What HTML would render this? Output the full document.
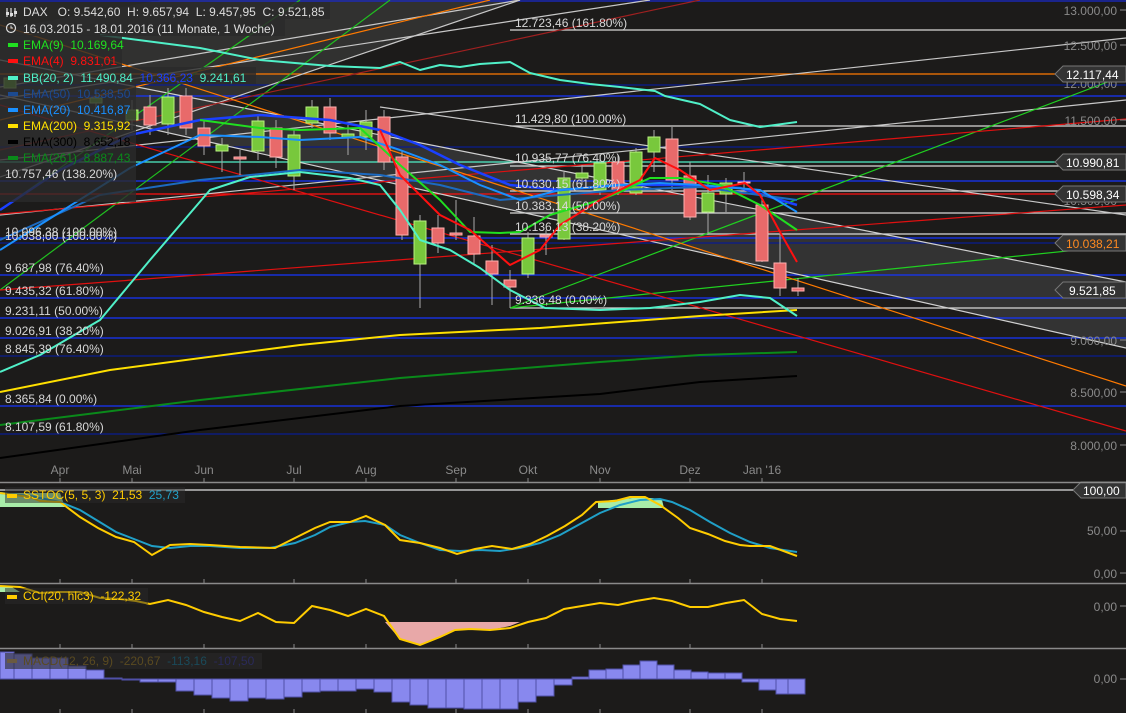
<!DOCTYPE html>
<html><head><meta charset="utf-8">
<style>
html,body{margin:0;padding:0;background:#1c1b1a;}
body{width:1126px;height:713px;overflow:hidden;position:relative;font-family:"Liberation Sans",sans-serif;}
svg{position:absolute;left:0;top:0}
svg text{font-family:"Liberation Sans",sans-serif;font-size:12px;white-space:pre}
</style></head><body>
<svg width="1126" height="713" viewBox="0 0 1126 713" xmlns="http://www.w3.org/2000/svg" xml:space="preserve">
<rect width="1126" height="713" fill="#1c1b1a"/>
<polygon points="0,30 0,177 520,0 160,0" fill="#3a3a3a" opacity="0.7"/>
<polygon points="0,60 1126,282 1126,348 0,95" fill="#333333"/>
<g stroke-width="1.3">
<line x1="0" y1="1" x2="1126" y2="1" stroke="#1a2ad0"/>
<line x1="510" y1="30" x2="1126" y2="30" stroke="#d8d8d8"/>
<line x1="0" y1="74" x2="1060" y2="74" stroke="#ff7a00"/>
<line x1="0" y1="85" x2="1126" y2="85" stroke="#0a1c90"/>
<line x1="0" y1="96" x2="1126" y2="96" stroke="#1535ff"/>
<line x1="510" y1="126" x2="1126" y2="126" stroke="#d8d8d8"/>
<line x1="0" y1="147" x2="1126" y2="147" stroke="#0a1c90"/>
<line x1="0" y1="162" x2="1060" y2="162" stroke="#50f0c8"/>
<line x1="510" y1="166" x2="1126" y2="166" stroke="#d8d8d8"/>
<line x1="0" y1="181" x2="1126" y2="181" stroke="#1535ff"/>
<line x1="510" y1="191" x2="1126" y2="191" stroke="#d8d8d8"/>
<line x1="0" y1="194" x2="1060" y2="194" stroke="#ff1010"/>
<line x1="510" y1="213" x2="1126" y2="213" stroke="#d8d8d8"/>
<line x1="510" y1="234" x2="1126" y2="234" stroke="#d8d8d8"/>
<line x1="0" y1="238" x2="1126" y2="238" stroke="#1535ff"/>
<line x1="0" y1="243" x2="1126" y2="243" stroke="#0a1c90"/>
<line x1="0" y1="275" x2="1126" y2="275" stroke="#1535ff"/>
<line x1="0" y1="298" x2="1126" y2="298" stroke="#1535ff"/>
<line x1="510" y1="308" x2="1126" y2="308" stroke="#d8d8d8"/>
<line x1="0" y1="318" x2="1126" y2="318" stroke="#1535ff"/>
<line x1="0" y1="338" x2="1126" y2="338" stroke="#1535ff"/>
<line x1="0" y1="356" x2="1126" y2="356" stroke="#0a1c90"/>
<line x1="0" y1="406" x2="1126" y2="406" stroke="#1535ff"/>
<line x1="0" y1="434" x2="1126" y2="434" stroke="#0a1c90"/>
</g>
<g stroke-width="1.2" fill="none">
<line x1="0" y1="177" x2="520" y2="0" stroke="#c8c8c8"/>
<line x1="0" y1="160" x2="1126" y2="38" stroke="#c8c8c8"/>
<line x1="0" y1="99" x2="650" y2="0" stroke="#c8c8c8"/>
<line x1="0" y1="87" x2="520" y2="0" stroke="#c8c8c8"/>
<line x1="0" y1="215" x2="1126" y2="100" stroke="#c8c8c8"/>
<line x1="0" y1="60" x2="1126" y2="282" stroke="#d0d0d0"/>
<line x1="0" y1="95" x2="1126" y2="348" stroke="#d0d0d0"/>
<line x1="380" y1="107" x2="1126" y2="215" stroke="#c8c8c8"/>
<line x1="0" y1="210" x2="300" y2="0" stroke="#20c020"/>
<line x1="0" y1="290" x2="390" y2="0" stroke="#20c020"/>
<line x1="510" y1="308" x2="1126" y2="75" stroke="#20d020"/>
<line x1="510" y1="308" x2="1126" y2="245" stroke="#20d020"/>
<line x1="0" y1="290" x2="1126" y2="205" stroke="#e01010"/>
<line x1="0" y1="214" x2="1126" y2="119" stroke="#e01010"/>
<line x1="0" y1="105" x2="1126" y2="431" stroke="#e01010"/>
<line x1="0" y1="150" x2="700" y2="0" stroke="#a02020"/>
<line x1="0" y1="25" x2="1126" y2="386" stroke="#ff7a00"/>
<line x1="0" y1="120" x2="490" y2="0" stroke="#ff7a00"/>
</g>
<g stroke-width="1">
<g stroke="#aaa">
<line x1="96" y1="90" x2="96" y2="110"/><line x1="132" y1="100" x2="132" y2="130"/><line x1="150" y1="95" x2="150" y2="135"/><line x1="168" y1="88" x2="168" y2="135"/><line x1="186" y1="88" x2="186" y2="135"/><line x1="204" y1="120" x2="204" y2="155"/><line x1="222" y1="138" x2="222" y2="172"/><line x1="240" y1="150" x2="240" y2="175"/><line x1="258" y1="115" x2="258" y2="160"/><line x1="276" y1="120" x2="276" y2="168"/><line x1="294" y1="128" x2="294" y2="190"/><line x1="312" y1="100" x2="312" y2="128"/><line x1="330" y1="98" x2="330" y2="140"/><line x1="348" y1="125" x2="348" y2="155"/><line x1="366" y1="110" x2="366" y2="150"/><line x1="384" y1="110" x2="384" y2="170"/>
<line x1="402" y1="150" x2="402" y2="240"/><line x1="420" y1="215" x2="420" y2="308"/><line x1="438" y1="215" x2="438" y2="253"/><line x1="456" y1="200" x2="456" y2="240"/><line x1="474" y1="217" x2="474" y2="265"/><line x1="492" y1="245" x2="492" y2="305"/><line x1="510" y1="270" x2="510" y2="308"/><line x1="528" y1="232" x2="528" y2="278"/><line x1="546" y1="230" x2="546" y2="255"/><line x1="564" y1="172" x2="564" y2="240"/><line x1="582" y1="165" x2="582" y2="185"/><line x1="600" y1="155" x2="600" y2="195"/><line x1="618" y1="155" x2="618" y2="195"/><line x1="636" y1="148" x2="636" y2="195"/><line x1="654" y1="130" x2="654" y2="172"/><line x1="672" y1="127" x2="672" y2="190"/><line x1="690" y1="162" x2="690" y2="220"/><line x1="708" y1="175" x2="708" y2="235"/><line x1="726" y1="178" x2="726" y2="212"/><line x1="744" y1="172" x2="744" y2="188"/><line x1="762" y1="195" x2="762" y2="262"/><line x1="780" y1="233" x2="780" y2="296"/><line x1="798" y1="278" x2="798" y2="296"/>
</g>
<g fill="#78c83c" stroke="#b8f080">
<rect x="4" y="78" width="12" height="10"/><rect x="90" y="98" width="12" height="5"/><rect x="126" y="110" width="12" height="10"/><rect x="162" y="97" width="12" height="27"/><rect x="216" y="145" width="12" height="6"/><rect x="252" y="121" width="12" height="30"/><rect x="288" y="135" width="12" height="41"/><rect x="306" y="107" width="12" height="16"/><rect x="342" y="134" width="12" height="4"/><rect x="360" y="122" width="12" height="15"/>
<rect x="414" y="221" width="12" height="43"/><rect x="522" y="238" width="12" height="36"/><rect x="558" y="178" width="12" height="61"/><rect x="576" y="173" width="12" height="5"/><rect x="594" y="163" width="12" height="27"/><rect x="630" y="152" width="12" height="41"/><rect x="648" y="137" width="12" height="15"/><rect x="702" y="193" width="12" height="19"/><rect x="720" y="183" width="12" height="11"/>
</g>
<g fill="#e86a6a" stroke="#ffb0b0">
<rect x="144" y="107" width="12" height="18"/><rect x="180" y="96" width="12" height="32"/><rect x="198" y="128" width="12" height="18"/><rect x="234" y="157" width="12" height="2"/><rect x="270" y="128" width="12" height="29"/><rect x="324" y="107" width="12" height="26"/><rect x="378" y="117" width="12" height="45"/>
<rect x="396" y="157" width="12" height="78"/><rect x="432" y="228" width="12" height="15"/><rect x="450" y="233" width="12" height="2"/><rect x="468" y="236" width="12" height="18"/><rect x="486" y="261" width="12" height="13"/><rect x="504" y="280" width="12" height="7"/><rect x="540" y="235" width="12" height="2"/><rect x="612" y="162" width="12" height="28"/><rect x="666" y="139" width="12" height="41"/><rect x="684" y="176" width="12" height="41"/><rect x="738" y="182" width="12" height="1"/><rect x="756" y="205" width="12" height="56"/><rect x="774" y="263" width="12" height="25"/><rect x="792" y="288" width="12" height="3"/>
</g>
</g>
<g fill="none" stroke-width="2" stroke-linejoin="round">
<polyline stroke="#000" points="0,458 200,430 400,406 600,394 700,382 797,376"/>
<polyline stroke="#0a8a1a" points="0,425 200,400 400,378 600,362 700,355 797,352"/>
<polyline stroke="#ffe000" points="0,392 110,370 300,345 400,335 540,328 700,316 797,310"/>
<polyline stroke="#50f0c8" points="0,372 40,355 100,320 150,260 180,225 210,190 250,177 300,172 350,178 380,185 400,210 420,240 450,250 480,268 510,290 545,308 600,310 650,308 700,302 740,295 770,298 797,316"/>
<polyline stroke="#50f0c8" points="100,35 200,48 260,60 330,66 380,68 400,62 420,70 440,65 460,67 480,64 510,62 530,73 560,80 590,84 620,87 655,91 665,96 700,104 730,120 760,127 797,122"/>
<polyline stroke="#1a40ff" stroke-width="2.5" points="0,210 60,170 130,135 200,120 260,115 330,120 380,130 420,145 460,165 510,185 560,190 620,185 680,185 740,188 797,205"/>
<polyline stroke="#1c6ac0" points="0,240 100,195 200,180 300,170 380,175 440,185 500,200 560,195 620,190 700,187 797,200"/>
<polyline stroke="#1a90ff" points="0,250 130,168 200,135 260,137 300,140 360,137 400,150 440,165 480,185 520,200 560,190 620,185 660,183 700,185 760,190 797,212"/>
<polyline stroke="#20e020" points="200,120 260,128 300,130 360,128 400,165 440,200 470,232 500,233 520,232 550,215 600,200 620,192 650,178 680,178 720,185 760,205 797,230"/>
<polyline stroke="#ff1010" points="380,130 400,175 440,215 470,230 510,265 540,250 560,225 600,200 640,180 655,158 680,170 710,190 745,183 760,195 780,232 797,262"/>
</g>
<g>
<rect x="0" y="2" width="330" height="17" fill="#2a2a2a" opacity="0.85"/>
<rect x="0" y="19" width="285" height="17" fill="#2a2a2a" opacity="0.85"/>
<rect x="0" y="35" width="122" height="16" fill="#2a2a2a" opacity="0.8"/>
<rect x="0" y="51" width="122" height="16" fill="#2a2a2a" opacity="0.8"/>
<rect x="0" y="67" width="256" height="17" fill="#2a2a2a" opacity="0.8"/>
<rect x="0" y="84" width="136" height="16" fill="#2a2a2a" opacity="0.8"/>
<rect x="0" y="100" width="136" height="102" fill="#2a2a2a" opacity="0.8"/>
</g>
<g stroke="#ddd" stroke-width="1.2"><line x1="7" y1="8" x2="7" y2="17"/><line x1="11" y1="8" x2="11" y2="17"/><line x1="15" y1="8" x2="15" y2="17"/></g>
<g fill="#ddd"><rect x="6" y="12" width="3" height="3"/><rect x="10" y="13" width="3" height="3"/><rect x="14" y="11" width="3" height="3"/></g>
<g font-size="12">
<text x="23" y="16" fill="#ddd">DAX   O: 9.542,60  H: 9.657,94  L: 9.457,95  C: 9.521,85</text>
<circle cx="11" cy="28" r="4.5" fill="none" stroke="#ddd" stroke-width="1.2"/><path d="M11 25.5V28H13" stroke="#ddd" fill="none"/>
<text x="23" y="33" fill="#ddd">16.03.2015 - 18.01.2016 (11 Monate, 1 Woche)</text>
<rect x="8" y="43" width="10" height="4" fill="#20e020"/><text x="23" y="49" fill="#20e020">EMA(9)  10.169,64</text>
<rect x="8" y="59" width="10" height="4" fill="#ff1010"/><text x="23" y="65" fill="#ff1010">EMA(4)  9.831,01</text>
<rect x="8" y="76" width="10" height="4" fill="#50f0c8"/><text x="23" y="82" fill="#50f0c8">BB(20, 2)  11.490,84  <tspan fill="#1a40ff">10.366,23</tspan>  9.241,61</text>
<rect x="8" y="92" width="10" height="4" fill="#1c4a90"/><text x="23" y="98" fill="#1c4a90">EMA(50)  10.538,50</text>
<rect x="8" y="108" width="10" height="4" fill="#1a90ff"/><text x="23" y="114" fill="#1a90ff">EMA(20)  10.416,87</text>
<rect x="8" y="124" width="10" height="4" fill="#ffe000"/><text x="23" y="130" fill="#ffe000">EMA(200)  9.315,92</text>
<rect x="8" y="140" width="10" height="4" fill="#000"/><text x="23" y="146" fill="#000">EMA(300)  8.652,18</text>
<rect x="8" y="156" width="10" height="4" fill="#0a8a1a"/><text x="23" y="162" fill="#0a8a1a">EMA(261)  8.887,43</text>
</g>
<g fill="#d8d8d8" font-size="12">
<text x="5" y="178">10.757,46 (138.20%)</text>
<text x="5" y="236">10.096,38 (100.00%)</text>
<text x="5" y="240">10.038,00 (100.00%)</text>
<text x="5" y="272">9.687,98 (76.40%)</text>
<text x="5" y="295">9.435,32 (61.80%)</text>
<text x="5" y="315">9.231,11 (50.00%)</text>
<text x="5" y="335">9.026,91 (38.20%)</text>
<text x="5" y="353">8.845,39 (76.40%)</text>
<text x="5" y="403">8.365,84 (0.00%)</text>
<text x="5" y="431">8.107,59 (61.80%)</text>
<text x="515" y="27">12.723,46 (161.80%)</text>
<text x="515" y="123">11.429,80 (100.00%)</text>
<text x="515" y="162">10.935,77 (76.40%)</text>
<text x="515" y="188">10.630,15 (61.80%)</text>
<text x="515" y="210">10.383,14 (50.00%)</text>
<text x="515" y="231">10.136,13 (38.20%)</text>
<text x="515" y="304">9.336,48 (0.00%)</text>
</g>
<g fill="#8a8a8a" font-size="12" text-anchor="end">
<text x="1117" y="15">13.000,00</text><text x="1117" y="50">12.500,00</text><text x="1117" y="88">12.000,00</text><text x="1117" y="125">11.500,00</text><text x="1117" y="205">10.500,00</text><text x="1117" y="345">9.000,00</text><text x="1117" y="397">8.500,00</text><text x="1117" y="450">8.000,00</text>
<text x="1117" y="535">50,00</text><text x="1117" y="578">0,00</text><text x="1117" y="611">0,00</text><text x="1117" y="683">0,00</text>
</g>
<g stroke="#8a8a8a"><line x1="1120" y1="10" x2="1126" y2="10"/><line x1="1120" y1="45" x2="1126" y2="45"/><line x1="1120" y1="120" x2="1126" y2="120"/><line x1="1120" y1="340" x2="1126" y2="340"/><line x1="1120" y1="392" x2="1126" y2="392"/><line x1="1120" y1="445" x2="1126" y2="445"/><line x1="1120" y1="531" x2="1126" y2="531"/><line x1="1120" y1="573" x2="1126" y2="573"/><line x1="1120" y1="606" x2="1126" y2="606"/><line x1="1120" y1="679" x2="1126" y2="679"/></g>
<g font-size="13" stroke="#777" stroke-width="1">
<path d="M1055 74 L1063 66 H1126 V82 H1063 Z" fill="#333"/><text x="1066" y="79" fill="#fff" stroke="none" font-size="13">12.117,44</text>
<path d="M1055 162 L1063 154 H1126 V170 H1063 Z" fill="#333"/><text x="1066" y="167" fill="#fff" stroke="none" font-size="13">10.990,81</text>
<path d="M1055 194 L1063 186 H1126 V202 H1063 Z" fill="#333"/><text x="1066" y="199" fill="#fff" stroke="none" font-size="13">10.598,34</text>
<path d="M1055 243 L1063 235 H1126 V251 H1063 Z" fill="#333"/><text x="1066" y="248" fill="#ff8a20" stroke="none" font-size="13">10.038,21</text>
<path d="M1055 290 L1063 282 H1126 V298 H1063 Z" fill="#333"/><text x="1069" y="295" fill="#fff" stroke="none" font-size="13">9.521,85</text>
<path d="M1073 490 L1081 482 H1126 V498 H1081 Z" fill="#333"/><text x="1083" y="495" fill="#fff" stroke="none" font-size="13">100,00</text>
</g>
<g fill="#8a8a8a" font-size="12" text-anchor="middle">
<text x="60" y="474">Apr</text><text x="132" y="474">Mai</text><text x="204" y="474">Jun</text><text x="294" y="474">Jul</text><text x="366" y="474">Aug</text><text x="456" y="474">Sep</text><text x="528" y="474">Okt</text><text x="600" y="474">Nov</text><text x="690" y="474">Dez</text><text x="762" y="474">Jan '16</text>
</g>
<g stroke="#8a8a8a" stroke-width="1">
<line x1="0" y1="482.5" x2="1126" y2="482.5" stroke-width="1.5"/>
<line x1="0" y1="583.5" x2="1126" y2="583.5" stroke-width="1.5"/>
<line x1="0" y1="648.5" x2="1126" y2="648.5" stroke-width="1.5"/>
<g id="ticks"><line x1="60" y1="478" x2="60" y2="482"/><line x1="132" y1="478" x2="132" y2="482"/><line x1="204" y1="478" x2="204" y2="482"/><line x1="294" y1="478" x2="294" y2="482"/><line x1="366" y1="478" x2="366" y2="482"/><line x1="456" y1="478" x2="456" y2="482"/><line x1="528" y1="478" x2="528" y2="482"/><line x1="600" y1="478" x2="600" y2="482"/><line x1="690" y1="478" x2="690" y2="482"/><line x1="762" y1="478" x2="762" y2="482"/></g>
<use href="#ticks" y="101"/><use href="#ticks" y="166"/><use href="#ticks" y="231"/>
</g>
<line x1="0" y1="490" x2="1073" y2="490" stroke="#e0e0e0" stroke-width="1.3"/>
<polygon points="0,493 60,493 65,507 0,507" fill="#a8eca8"/>
<polygon points="598,502 612,500 632,498 652,498 662,500 664,508 598,508" fill="#a8eca8"/>
<polyline fill="none" stroke="#20a0c8" stroke-width="2" points="0,493 30,496 60,502 80,510 98,521 116,532 134,539 152,546 170,548 190,546 210,546 240,548 270,548 295,543 315,535 330,527 350,522 365,521 385,525 400,535 420,543 440,550 460,551 480,550 500,551 520,548 540,543 560,535 580,524 600,513 620,505 640,500 660,499 672,502 690,510 710,522 730,533 750,542 770,548 797,552"/>
<polyline fill="none" stroke="#ffcc00" stroke-width="2" points="0,493 30,497 40,501 60,502 80,517 98,528 116,537 134,542 152,555 170,545 190,544 210,545 240,547 275,548 295,538 315,528 330,522 350,522 366,516 385,525 400,540 420,543 440,548 457,554 475,549 492,546 512,549 530,544 547,536 565,526 582,515 596,502 615,501 630,497 645,497 660,505 678,518 690,528 708,534 725,541 740,545 750,546 770,546 797,556"/>
<rect x="5" y="487" width="180" height="16" fill="#2a2a2a" opacity="0.5"/>
<text x="23" y="499" font-size="12" fill="#ffcc00">SSTOC(5, 5, 3)  21,53  <tspan fill="#20a0c8">25,73</tspan></text>
<rect x="7" y="494" width="10" height="4" fill="#ffcc00"/>
<polygon points="385,622 520,622 510,626 490,630 470,629 455,630 440,637 420,645 400,639" fill="#e8a8a8"/>
<polygon points="0,586 10,586 20,592 0,592" fill="#a8eca8"/>
<polyline fill="none" stroke="#ffcc00" stroke-width="2" points="0,586 20,587 40,593 60,592 80,592 100,598 120,599 136,601 150,604 168,600 186,605 204,612 222,617 240,621 258,613 276,622 294,623 312,606 330,610 348,616 366,609 384,616 400,639 420,645 440,637 455,630 470,629 490,630 510,628 528,622 546,618 564,609 582,606 600,603 618,605 636,601 654,598 672,601 690,607 708,607 726,603 744,600 762,614 780,619 797,621"/>
<rect x="5" y="588" width="143" height="16" fill="#2a2a2a" opacity="0.5"/>
<text x="23" y="600" font-size="12" fill="#ffcc00">CCI(20, hlc3)  -122,32</text>
<rect x="7" y="595" width="10" height="4" fill="#ffcc00"/>
<g fill="#8888ee" stroke="#5050a8" stroke-width="1">
<rect x="0" y="652" width="14" height="27"/><rect x="14" y="654" width="18" height="25"/><rect x="32" y="658" width="18" height="21"/><rect x="50" y="658" width="18" height="21"/><rect x="68" y="666" width="18" height="13"/><rect x="86" y="670" width="18" height="9"/><rect x="104" y="678" width="18" height="1"/>
<rect x="122" y="679" width="18" height="1"/><rect x="140" y="679" width="18" height="3"/><rect x="158" y="679" width="18" height="3"/><rect x="176" y="679" width="18" height="12"/><rect x="194" y="679" width="18" height="16"/><rect x="212" y="679" width="18" height="19"/><rect x="230" y="679" width="18" height="22"/><rect x="248" y="679" width="18" height="19"/><rect x="266" y="679" width="18" height="20"/><rect x="284" y="679" width="18" height="18"/><rect x="302" y="679" width="18" height="13"/><rect x="320" y="679" width="18" height="12"/><rect x="338" y="679" width="18" height="12"/><rect x="356" y="679" width="18" height="10"/><rect x="374" y="679" width="18" height="13"/><rect x="392" y="679" width="18" height="23"/><rect x="410" y="679" width="18" height="26"/><rect x="428" y="679" width="18" height="29"/><rect x="446" y="679" width="18" height="29"/><rect x="464" y="679" width="18" height="30"/><rect x="482" y="679" width="18" height="30"/><rect x="500" y="679" width="18" height="30"/><rect x="518" y="679" width="18" height="23"/><rect x="536" y="679" width="18" height="17"/><rect x="554" y="679" width="18" height="6"/>
<rect x="572" y="677" width="17" height="2"/><rect x="589" y="670" width="17" height="9"/><rect x="606" y="669" width="17" height="10"/><rect x="623" y="665" width="17" height="14"/><rect x="640" y="661" width="17" height="18"/><rect x="657" y="665" width="17" height="14"/><rect x="674" y="670" width="17" height="9"/><rect x="691" y="672" width="17" height="7"/><rect x="708" y="673" width="17" height="6"/><rect x="725" y="673" width="17" height="6"/>
<rect x="742" y="679" width="17" height="3"/><rect x="759" y="679" width="17" height="11"/><rect x="776" y="679" width="17" height="15"/><rect x="788" y="679" width="17" height="15"/>
</g>
<rect x="5" y="653" width="257" height="16" fill="#2a2a2a" opacity="0.6"/>
<rect x="7" y="659" width="10" height="4" fill="#6a5a40"/>
<text x="23" y="665" font-size="12" fill="#5a4a20">MACD(12, 26, 9)  -220,67  <tspan fill="#1a4a5a">-113,16</tspan>  <tspan fill="#2a2a5a">-107,50</tspan></text>
</svg>
</body></html>
